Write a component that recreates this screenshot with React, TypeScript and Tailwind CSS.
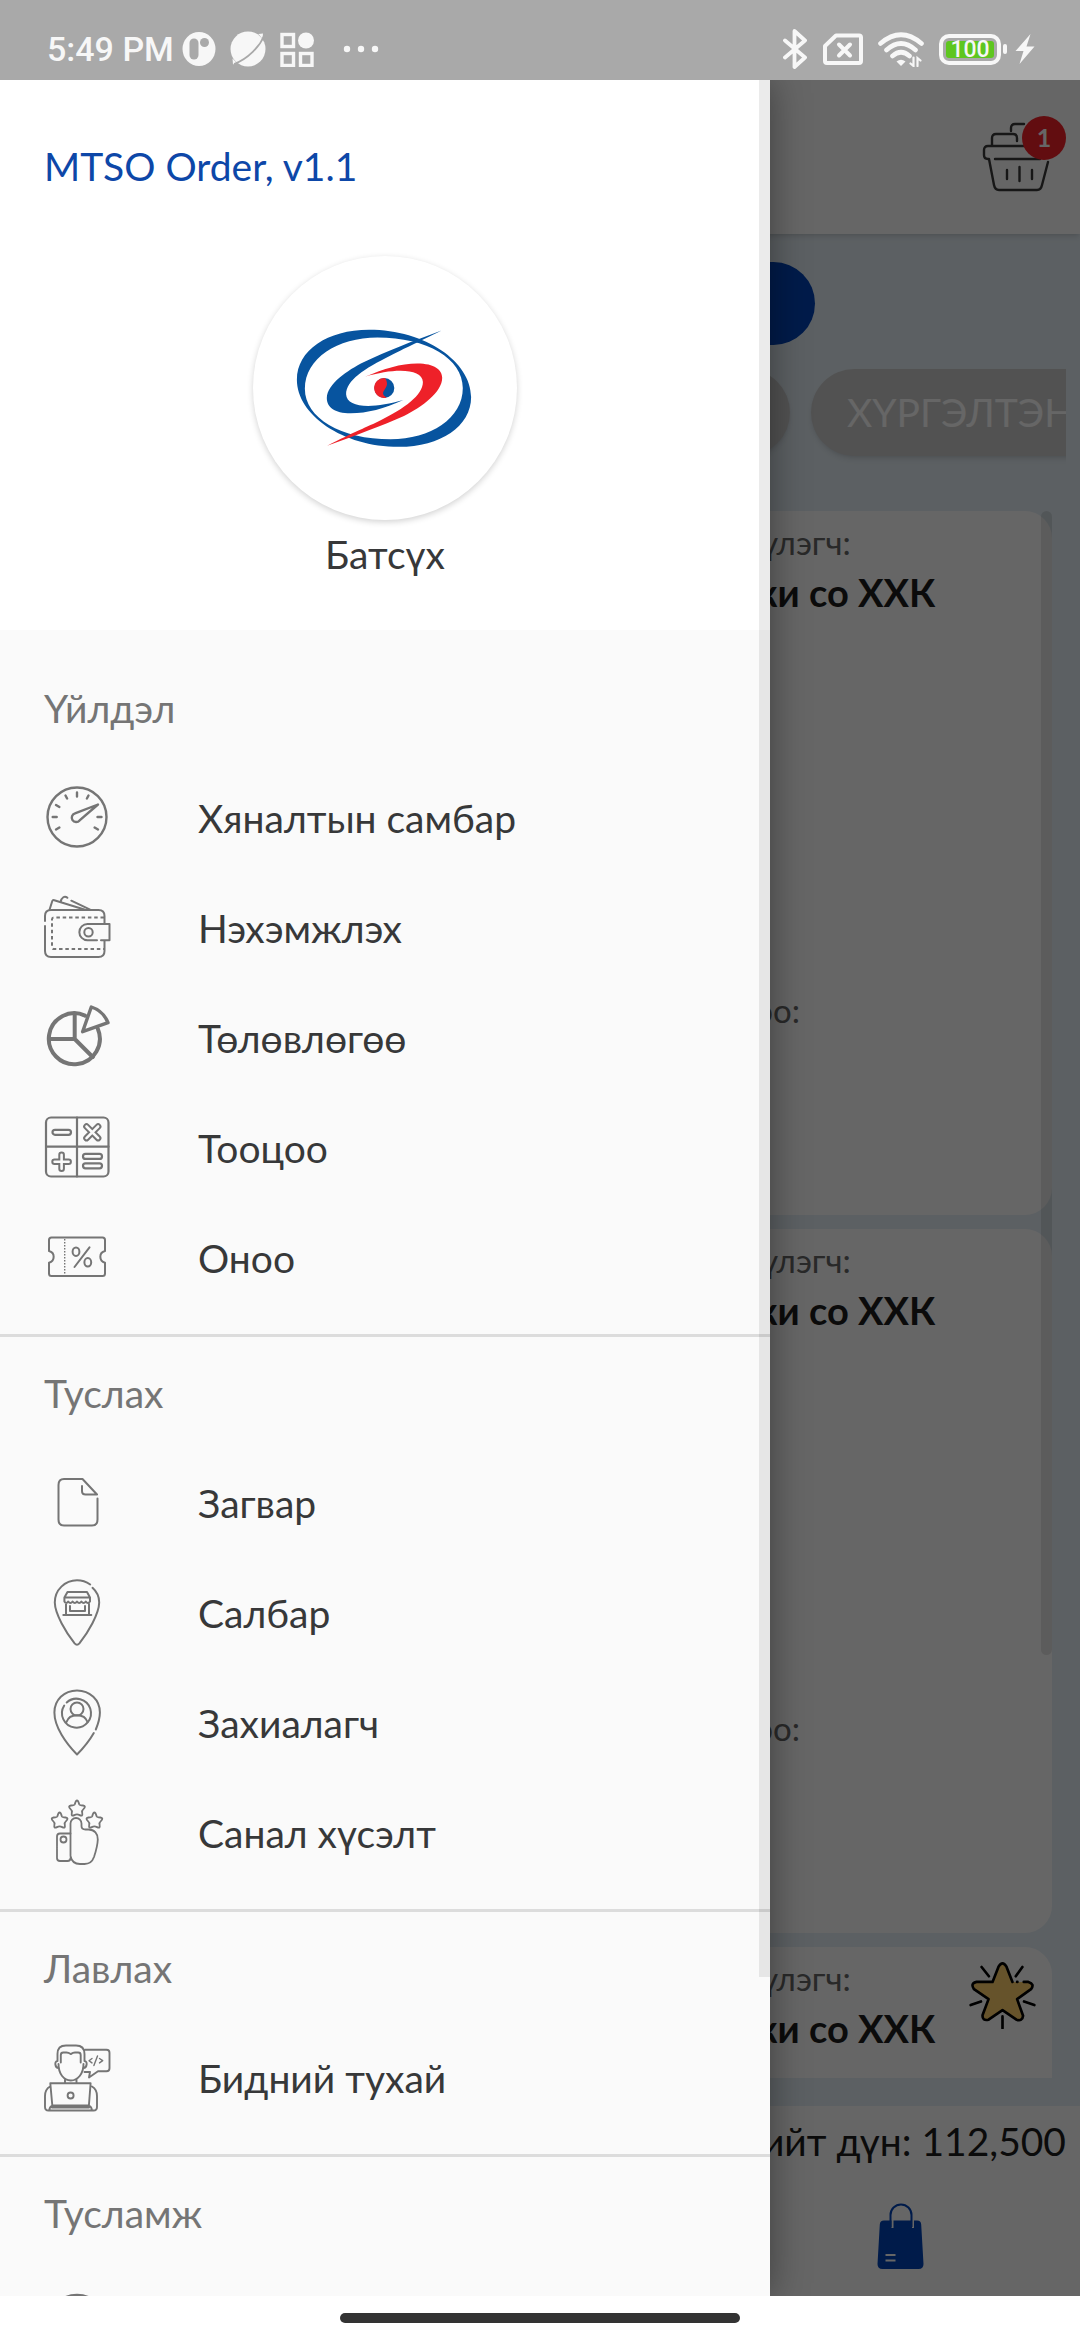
import React, { useState } from 'react';

type MenuItem = {
  label: string;
  icon: React.ReactNode;
};

type MenuSection = {
  title: string;
  items: MenuItem[];
};

type Order = {
  id: number;
  starred: boolean;
};

const STAR = 'M0 -8 Q1.2 -8 2.2 -4.2 Q2.6 -3 6 -3 Q9.6 -2.4 6.4 .6 Q4.6 2 5.2 4.4 Q6 8.4 2.6 6.6 Q0 5.2 -2.6 6.6 Q-6 8.4 -5.2 4.4 Q-4.6 2 -6.4 .6 Q-9.6 -2.4 -6 -3 Q-2.6 -3 -2.2 -4.2 Q-1.2 -8 0 -8Z';

function LineIcon({ width = 2.2, children }: { width?: number; children: React.ReactNode }) {
  return (
    <svg
      viewBox="0 0 66 66"
      className="size-[66px] shrink-0 overflow-visible text-[#757575]"
      fill="none"
      stroke="currentColor"
      strokeWidth={width}
      strokeLinecap="round"
      strokeLinejoin="round"
      aria-hidden="true"
    >
      {children}
    </svg>
  );
}

const GaugeIcon = (
  <LineIcon width={2.4}>
    <circle cx="33" cy="32" r="29.5" />
    <path d="M33 7.5v4M21.5 10.5l1.6 3M44.5 10.5l-1.6 3M12 20l3.4 2M8.7 32h4M53.5 32h4M12 44.5l3.4-2M54 44.5l-3.4-2" />
    <path d="M54 19.5 31 28.4a4.4 4.4 0 1 0 4.6 7z" />
  </LineIcon>
);

const WalletIcon = (
  <LineIcon width={2}>
    <path d="M1 26v-5q0-6 6-6h47.5q6 0 6 6v8M60.5 46v10q0 6-6 6H7q-6 0-6-6V31" />
    <path d="M60 22.5H10q-2 0-2 2V52q0 2 2 2h50" strokeDasharray="3.5 2.8" strokeLinecap="butt" />
    <path d="M53 45.3h-9.5a8.15 8.15 0 0 1 0-16.3h22v16.3H57" />
    <circle cx="44.5" cy="37.3" r="4.2" />
    <path d="M5.6 14.5 8.3 6q.4-1.2 2-.8l30 9.3M16.6 7c1-4.6 4-6.6 6.8-4.2M27.3 5.7l18.8 9" />
  </LineIcon>
);

const PieIcon = (
  <LineIcon width={4}>
    <path d="M41 10.6A25.5 25.5 0 1 0 53.8 23.8" />
    <path d="M30.7 8.5V34H5.2M30.7 34l18 18" />
    <path d="M38.6 26.7 47.3 2A27 27 0 0 1 64 17.7z" strokeWidth="3.4" />
  </LineIcon>
);

const CalcIcon = (
  <LineIcon>
    <rect x="2" y="2.5" width="62.5" height="59" rx="5" />
    <path d="M33 2.5v59M2 31.7h62.5" />
    <rect x="8.5" y="14.8" width="18.5" height="5" rx="2.5" />
    <rect x="39" y="38.9" width="19" height="5" rx="2.5" />
    <rect x="39" y="48.3" width="19" height="5" rx="2.5" />
    <path d="M17.6 39.7v14M10.6 46.7h14M42.5 11.5l11.6 11.6M54.1 11.5 42.5 23.1" strokeWidth="6.6" />
    <path d="M17.6 39.7v14M10.6 46.7h14M42.5 11.5l11.6 11.6M54.1 11.5 42.5 23.1" className="stroke-[#fafafa]" strokeWidth="2.6" />
  </LineIcon>
);

const CouponIcon = (
  <LineIcon width={2}>
    <path d="M5 26V15q0-2.5 2.5-2.5h51q2.5 0 2.5 2.5v11a6 6 0 0 0 0 11.7v10.8q0 2.5-2.5 2.5h-51Q5 51 5 48.5V37.7A6 6 0 0 0 5 26z" />
    <path d="M20.7 14v36" strokeWidth="1.4" strokeDasharray="1.4 1.6" strokeLinecap="butt" />
    <ellipse cx="32" cy="26.7" rx="3.4" ry="4.3" />
    <ellipse cx="43.8" cy="37.3" rx="3.4" ry="4.3" />
    <path d="M45.5 22.3 30.5 42" />
  </LineIcon>
);

const FileIcon = (
  <LineIcon width={2}>
    <path d="M53.5 28.5v21q0 6-5.5 6H20q-5.5 0-5.5-6V15q0-6 5.5-6h18.5L53 24.5H41.5q-3.5 0-3.5-3.5v-5" />
  </LineIcon>
);

const ShopPinIcon = (
  <LineIcon width={2}>
    <path d="M48.5 7.8C53 11.8 55.2 16.7 55.2 22.5 55 34 44 52.5 35.4 63.4q-2.4 2.6-4.8 0C22 52.5 11 34 10.8 22.5 10.8 9.7 21 .3 33 .3q7.2 0 13.2 4.2" />
    <path d="M23.5 12H43l3 5.5v4q-2.1 3-4.2 0-2.2 3-4.4 0-2.2 3-4.4 0-2.2 3-4.4 0-2.2 3-4.4 0-2 3-3.8 0v-4zM20.5 17.5H46M22 24v11M45 24v11M19.3 35h28M26 26v5h15v-5" />
  </LineIcon>
);

const ClientPinIcon = (
  <LineIcon width={2}>
    <path d="M51.8 39.5C54.3 33.5 55.9 28 55.9 22.5 55.9 10 46 .5 33 .5S10.4 10 10.4 22.5C10.4 37 22 53.5 33 64.5 39.5 58 45.5 50.5 49.8 43" />
    <path d="M22.7 12.5a14.5 14.5 0 1 1-2.5 3" />
    <circle cx="33" cy="19" r="6.5" />
    <path d="M22.5 32c1.5-4.5 6-6.8 10.5-6.8s9 2.3 10.5 6.8" />
  </LineIcon>
);

const FeedbackIcon = (
  <LineIcon width={1.8}>
    <path d={STAR} transform="translate(33 8.5)" />
    <path d={STAR} transform="translate(15.6 20.5)" />
    <path d={STAR} transform="translate(50.4 20.5)" />
    <path d="M26.5 56V23.5a5.5 5.5 0 0 1 11 0V26q0 3.5 4 3.5h3c6 0 9.5 4.5 9.3 10-.2 5-2.3 13-3.8 17.5-1.8 5-5 7-9.5 7H36q-8 0-9.5-8" />
    <path d="M26.5 33.5H16q-3 0-3 3V46M13 49v9q0 3 3 3h7.5q3 0 3-3M13 46.5v2" />
    <circle cx="19.5" cy="39.5" r="3" />
  </LineIcon>
);

const DeveloperIcon = (
  <LineIcon width={1.9}>
    <path d="M13.5 16V9Q13.5.5 22 .5h10Q40.5.5 40.5 9v7M13.5 16c-3.5 0-2.5 7 1 7M40.5 16c3.5 0 2.5 7-1 7" />
    <path d="M16.8 17.5V10q0-2.5 2.5-2.5h3.2q2 0 4.2 1.6 2.3-1.6 4.3-1.6h3.2q2.5 0 2.5 2.5v7.5" />
    <path d="M14.5 19c0 10 5.5 16.5 12.3 16.5S39.5 29 39.5 19M21 34.5V38M32.5 34.5V38" />
    <path d="M41 4.8h21.5q3 0 3 3v15.5q0 3-3 3H54l-9 6.2 1-5.5h-5.5" />
    <path d="m48 13.5-3 2.2 3 2.2M55.5 13.5l3.2 2.2-3.2 2.2M53.5 11l-3.6 9.5" strokeWidth="1.4" />
    <path d="M6.3 38.3h40.3l-1.7 22.2H8.3zM6 41.5c-3.5 2-5 5-5 9.5v11q0 3.5 3.5 3.5h45q3.5 0 3.5-3.5V51c0-4.5-1.5-7.5-5-9.5M8.3 60.5q-3 1.5-3 5M44.9 60.5q3 1.5 3 5M8 62.5h37" />
    <circle cx="26.6" cy="50.5" r="3" />
  </LineIcon>
);

const HelpIcon = (
  <LineIcon width={2.6}>
    <circle cx="33" cy="33" r="28" />
    <path d="M26 26a7 7 0 1 1 9 7q-2 1-2 4v2M33 46v1" />
  </LineIcon>
);

const sections: MenuSection[] = [
  {
    title: 'Үйлдэл',
    items: [
      { label: 'Хяналтын самбар', icon: GaugeIcon },
      { label: 'Нэхэмжлэх', icon: WalletIcon },
      { label: 'Төлөвлөгөө', icon: PieIcon },
      { label: 'Тооцоо', icon: CalcIcon },
      { label: 'Оноо', icon: CouponIcon },
    ],
  },
  {
    title: 'Туслах',
    items: [
      { label: 'Загвар', icon: FileIcon },
      { label: 'Салбар', icon: ShopPinIcon },
      { label: 'Захиалагч', icon: ClientPinIcon },
      { label: 'Санал хүсэлт', icon: FeedbackIcon },
    ],
  },
  {
    title: 'Лавлах',
    items: [{ label: 'Бидний тухай', icon: DeveloperIcon }],
  },
  {
    title: 'Тусламж',
    items: [{ label: 'Тусламж', icon: HelpIcon }],
  },
];

const orders: Order[] = [
  { id: 1, starred: false },
  { id: 2, starred: false },
  { id: 3, starred: true },
];

function StatusBar() {
  return (
    <div className="flex h-20 shrink-0 items-center justify-between bg-[#a9a9a9] pt-[18px] pr-[45px] pl-[47px] font-[Roboto,sans-serif] text-[#f7f7f7]">
      <div className="flex items-center">
        <span className="text-[34px] leading-10 font-medium">5:49 PM</span>
        <svg viewBox="0 0 34 36" className="ml-2 h-9 w-[34px]" aria-hidden="true">
          <ellipse cx="17" cy="18" rx="16.5" ry="17" fill="currentColor" />
          <rect x="7.5" y="7.5" width="9" height="21" rx="4.5" fill="#a9a9a9" />
          <circle cx="22.5" cy="11.5" r="4.5" fill="#a9a9a9" />
        </svg>
        <svg viewBox="0 0 36 36" className="ml-3.5 size-9" aria-hidden="true">
          <circle cx="18" cy="18" r="17.5" fill="currentColor" />
          <path d="M33 2.5l-4.5.5 4 5zM3 33.5l-.5-6 4 4z" fill="currentColor" />
          <path d="M34 5C30 15 18 28 4 33" fill="none" stroke="#a9a9a9" strokeWidth="1.8" />
        </svg>
        <svg viewBox="0 0 34 35" className="ml-3.5 h-[35px] w-[34px]" fill="none" stroke="currentColor" strokeWidth="3.4" aria-hidden="true">
          <rect x="2" y="2.5" width="11.5" height="12" />
          <rect x="2" y="21.5" width="11.5" height="12" />
          <rect x="20.5" y="21.5" width="11.5" height="12" />
          <circle cx="26" cy="8.5" r="8" fill="currentColor" stroke="none" />
        </svg>
        <svg viewBox="0 0 36 8" className="ml-[29px] h-2 w-9" fill="currentColor" aria-hidden="true">
          <circle cx="4" cy="4" r="3.2" />
          <circle cx="18" cy="4" r="3.2" />
          <circle cx="32" cy="4" r="3.2" />
        </svg>
      </div>
      <div className="flex items-center">
        <svg viewBox="0 0 24 40" className="h-10 w-6" fill="none" stroke="currentColor" strokeWidth="3.8" strokeLinecap="round" strokeLinejoin="round" aria-hidden="true">
          <path d="M2 11.5 22 28.5 11.5 38V2L22 11.5 2 28.5" />
        </svg>
        <svg viewBox="0 0 40 32" className="ml-4 h-8 w-10" fill="none" stroke="currentColor" strokeWidth="4" strokeLinecap="round" strokeLinejoin="round" aria-hidden="true">
          <path d="M13 2.5h23q2 0 2 2V28q0 2-2 2H4q-2 0-2-2V13z" />
          <path d="m16 11.5 11 11M27 11.5l-11 11" />
        </svg>
        <svg viewBox="0 0 46 35" className="ml-[15px] h-[35px] w-[46px]" fill="none" stroke="currentColor" strokeWidth="4.6" strokeLinecap="round" aria-hidden="true">
          <path d="M2.5 11.5Q23-6 43.5 11.5M8.5 18Q23 5 37.5 18M14.5 24Q23 16.5 31.5 24" />
          <path d="M18.5 29.5q4.5-3.5 9 0L23 34z" fill="currentColor" stroke="none" />
          <path d="M35.5 25.5V34l-3-2.5M39.5 34v-8l3 2.5" strokeWidth="2.2" />
        </svg>
        <div className="ml-[15px] flex h-[31px] w-[62px] items-center justify-center rounded-[10px] border-4 border-[#f7f7f7] p-[3px]">
          <span className="flex h-full w-full items-center justify-center rounded-[3px] bg-[#5ec61f] text-[23px] leading-none font-medium">100</span>
        </div>
        <span className="ml-0.5 h-2.5 w-1 rounded-sm bg-[#f7f7f7]" />
        <svg viewBox="0 0 20 30" className="ml-2 h-[30px] w-5" fill="currentColor" aria-hidden="true">
          <path d="M15.5 0 .5 17h8l-4 13 15-17.5h-8z" />
        </svg>
      </div>
    </div>
  );
}

function CompanyLogo() {
  return (
    <svg viewBox="66 46 794 794" className="size-full" aria-label="MTSO">
      <path
        fill="#07549f"
        fillRule="evenodd"
        d="M198 418C198 330 290 268 415 268 585 268 722 365 722 470 722 558 630 620 505 620 335 620 198 523 198 418ZM222 445C222 533 330 597 480 597 600 597 697 534 697 443 697 355 590 291 440 291 320 291 222 354 222 445Z"
      />
      <path
        fill="#07549f"
        d="M633 270C560 306 520 325 480 345 400 385 346 420 346 462 348 505 430 505 518 479 460 505 410 519 360 519 310 519 288 500 288 473 290 430 350 390 400 365 470 332 540 304 633 270Z"
      />
      <path
        fill="#ee2129"
        d="M403 409C460 385 510 369 560 369 612 369 635 388 635 412 635 455 575 500 520 527 450 558 380 583 289 617 370 575 410 560 450 540 520 505 577 465 577 425 575 383 490 383 403 409Z"
      />
      <circle cx="461" cy="443" r="30" fill="#07549f" />
      <path fill="#ee2129" d="M462 413a30 30 0 1 0 6 59q-14-8-10-18 10-14 11-22 0-14-7-19z" />
    </svg>
  );
}

function BasketButton() {
  return (
    <button type="button" aria-label="Сагс" className="relative size-[70px]">
      <svg viewBox="0 0 70 70" className="size-full" fill="none" stroke="#3a3a3a" strokeWidth="2.4" strokeLinecap="round" strokeLinejoin="round" aria-hidden="true">
        <path d="M29 9V6q0-4 4-4h9M10 23v-7q0-4 4-4h17q4 0 4 4v3" />
        <path d="M50 24H6q-4 0-4 4v5q0 4 4 4h1l5 26q1 5 5 5h38q4 0 5-5l6-23M13 37h45M25 48v9M37.5 45v14M50 48v9" />
      </svg>
      <span className="absolute -top-1.5 left-10 flex size-11 items-center justify-center rounded-full bg-[#f5222a] text-[25px] font-bold text-white">1</span>
    </button>
  );
}

function StarBadge() {
  return (
    <svg viewBox="688 188 200 202" className="size-[67px]" fill="none" stroke="#000" strokeWidth="8" strokeLinecap="round" strokeLinejoin="round" aria-hidden="true">
      <path d="M725 203l22 28M848 203l-20 28M692 318l31-11M884 318l-31-11M788 352v36" />
      <path
        fill="#ffd06b"
        stroke="none"
        d="M776 202q12-20 24 0l18 46h48q20 6 8 22l-42 30 18 50q-2 18-20 12l-42-29-42 29q-20 4-18-14l18-48-44-30q-12-18 8-22h48z"
      />
      <path d="M818 248l-18-46q-12-20-24 0l-18 46h-48q-20 4-8 22l44 30-18 48q-2 18 18 14l42-29 42 29q18 6 20-12l-18-50 42-30q12-16-8-22h-14M832 248h1" />
    </svg>
  );
}

function OrderCard({ order }: { order: Order }) {
  return (
    <li className="grid h-[704px] shrink-0 grid-cols-[634fr_390fr] grid-rows-[468px_1fr] rounded-[27px] bg-white pt-[11px]">
      <div />
      <div className="flex items-start justify-between pr-4">
        <dl className="whitespace-nowrap">
          <dt className="text-[33px] leading-10 text-[#666]">Нийлүүлэгч:</dt>
          <dd className="mt-1 text-[38px] leading-[52px] font-bold text-[#1c1c1c]">Мостки со ХХК</dd>
        </dl>
        {order.starred && (
          <div className="pt-1">
            <StarBadge />
          </div>
        )}
      </div>
      <div />
      <dl>
        <dt className="text-[33px] leading-10 text-[#666]">Хэм, тоо:</dt>
      </dl>
    </li>
  );
}

function OrdersScreen() {
  return (
    <div className="flex h-full flex-col bg-[#e6f0f7]">
      <header className="flex h-[154px] shrink-0 items-center justify-end bg-white pr-7 shadow-md">
        <BasketButton />
      </header>

      <button type="button" className="mx-auto mt-7 h-[83px] w-[550px] shrink-0 rounded-full bg-[#0044b8] text-[39px] text-white">
        Захиалах
      </button>
      <div className="mt-6 mr-3.5 flex h-[87px] shrink-0 gap-[21px] overflow-x-clip pl-3.5 text-[39px] whitespace-nowrap text-white">
        <button type="button" className="w-[776px] shrink-0 rounded-full bg-[#cdcdcd] shadow-md">
          ЗАХИАЛГА
        </button>
        <button type="button" className="shrink-0 rounded-full bg-[#cdcdcd] px-9 shadow-md">
          ХҮРГЭЛТЭНД
        </button>
      </div>

      <div className="relative mx-7 mt-[55px] min-h-0 flex-1 overflow-hidden">
        <ul className="flex flex-col gap-3.5">
          {orders.map((order) => (
            <OrderCard key={order.id} order={order} />
          ))}
        </ul>
        {/* scroll thumb */}
        <div className="absolute top-0 right-0 h-[73%] w-[11px] rounded-full bg-black/10" />
      </div>

      <footer className="mt-7 shrink-0 bg-white">
        <p className="pr-3.5 text-right text-[39px] leading-[70px] text-[#1c1c1c]">Нийт дүн: 112,500</p>
        <div className="grid h-[120px] grid-cols-3 items-center">
          <button type="button" aria-label="Захиалгын сагс" className="col-start-3 flex justify-center">
            <svg viewBox="0 0 47 66" className="h-[66px] w-[47px]" fill="none" aria-hidden="true">
              <path d="M7 17.5h33q4 0 4.2 4L46.5 61q0 5-5 5h-36q-5 0-5-5l2.3-39.5q.2-4 4.2-4z" fill="#0044b8" />
              <path d="M15.5 17v8M36 17v8" stroke="#fff" strokeWidth="2" />
              <path d="M13.5 24V12a10.5 10.5 0 0 1 21 0v12" stroke="#0044b8" strokeWidth="2" />
              <path d="M8.5 52h10M8.5 57.5h10" stroke="#fff" strokeWidth="2" />
            </svg>
          </button>
        </div>
      </footer>
    </div>
  );
}

function Drawer() {
  return (
    <aside className="relative h-full w-[770px] max-w-full overflow-hidden bg-[#fafafa]">
      <div className="flex flex-col bg-white px-11 pt-[63px] pb-[53px]">
        <h1 className="text-[39px] leading-[46px] text-[#0d47a8]">MTSO Order, v1.1</h1>
        <div className="mt-[67px] size-[264px] self-center rounded-full bg-white shadow-[0_2px_6px_rgba(0,0,0,0.18)]">
          <CompanyLogo />
        </div>
        <p className="mt-[11px] self-center text-[39px] leading-[46px] text-[#373839]">Батсүх</p>
      </div>

      <nav className="divide-y-3 divide-[#dcdcdc] pt-[22px]">
        {sections.map((section) => (
          <section key={section.title} className="pt-px pb-[21px]">
            <h2 className="px-11 text-[39px] leading-[110px] text-[#757575]">{section.title}</h2>
            <ul>
              {section.items.map((item) => (
                <li key={item.label}>
                  <a href="#" className="flex h-[110px] items-center gap-[88px] px-11 text-[39px] text-[#373839]">
                    {item.icon}
                    {item.label}
                  </a>
                </li>
              ))}
            </ul>
          </section>
        ))}
      </nav>

      {/* scroll thumb */}
      <div className="absolute top-0 right-0 h-[1897px] w-[11px] bg-black/8" />
    </aside>
  );
}

export default function App() {
  const [drawerOpen, setDrawerOpen] = useState(true);

  return (
    <div className="flex h-screen flex-col overflow-hidden bg-white font-[Lato,'Noto_Sans',sans-serif]">
      <StatusBar />

      <main className="relative min-h-0 flex-1 overflow-hidden">
        <OrdersScreen />

        {drawerOpen && (
          <div className="absolute inset-0 bg-black/60" onClick={() => setDrawerOpen(false)}>
            <div className="h-full w-fit shadow-[0_0_36px_rgba(0,0,0,0.4)]" onClick={(e) => e.stopPropagation()}>
              <Drawer />
            </div>
          </div>
        )}
      </main>

      {/* gesture bar */}
      <div className="flex h-11 shrink-0 items-center justify-center bg-white">
        <div className="h-2.5 w-[400px] rounded-full bg-[#333]" />
      </div>
    </div>
  );
}
